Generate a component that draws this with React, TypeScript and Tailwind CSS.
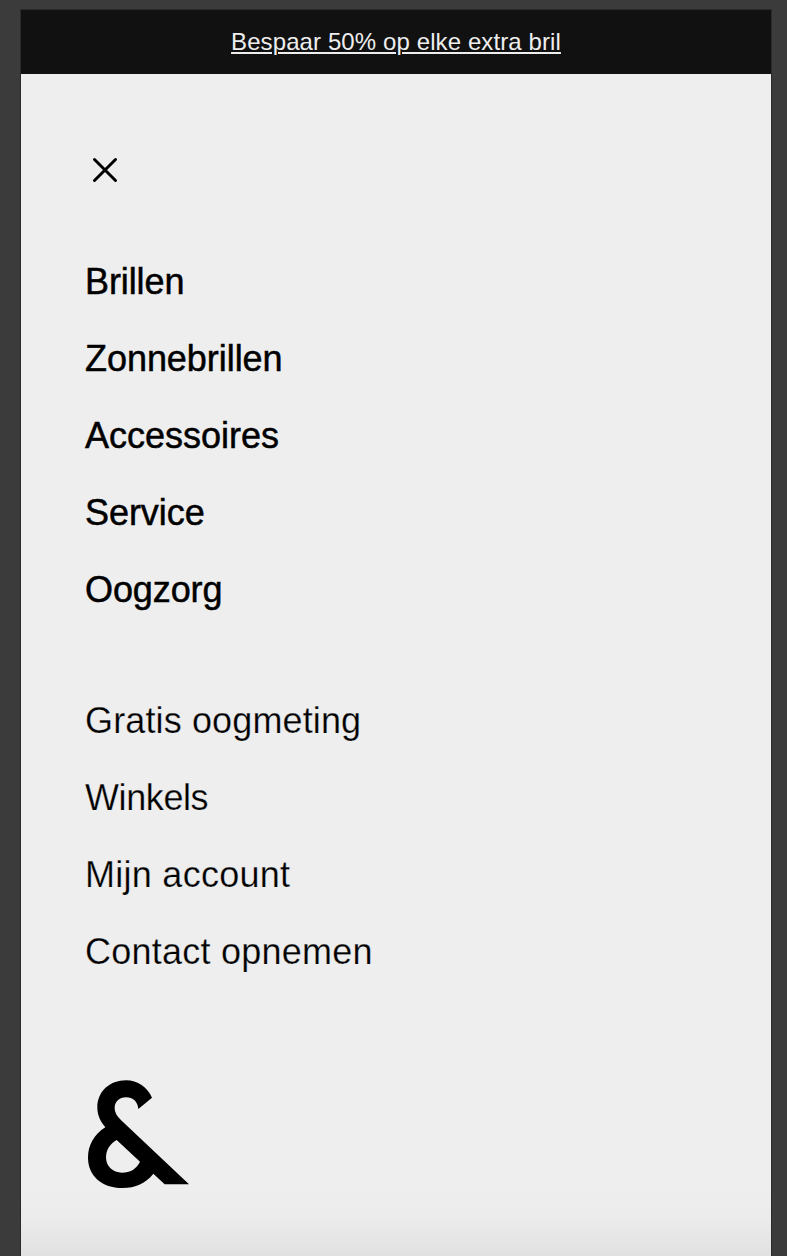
const primary = [
  { label: 'Brillen', tracking: 'tracking-[-0.1px]' },
  { label: 'Zonnebrillen', tracking: 'tracking-[-0.05px]' },
  { label: 'Accessoires', tracking: 'tracking-[0px]' },
  { label: 'Service', tracking: 'tracking-[-0.05px]' },
  { label: 'Oogzorg', tracking: 'tracking-[-0.1px]' },
];

const secondary = [
  { label: 'Gratis oogmeting', tracking: 'tracking-[0.13px]' },
  { label: 'Winkels', tracking: 'tracking-[-0.4px]' },
  { label: 'Mijn account', tracking: 'tracking-[0.27px]' },
  { label: 'Contact opnemen', tracking: 'tracking-[0.23px]' },
];

function CloseIcon() {
  return (
    <svg className="block h-7 w-7" viewBox="0 0 28 28" fill="none" stroke="#000" strokeWidth="3" strokeLinecap="round" aria-hidden="true">
      <path d="M3.5 3.5 24.5 24.5M24.5 3.5 3.5 24.5" />
    </svg>
  );
}

function Ampersand() {
  return (
    <svg className="block h-[135px] w-[130px]" viewBox="0 0 390 405" aria-hidden="true">
      <path
        fillRule="evenodd"
        d="M231 98C217 67 188 46 153 46C104 46 67 80 67 127C67 151 76 170 91 187C57 208 39 241 39 278C39 332 80 369 143 369C181 369 212 355 235 326L269 358H342L140 167C126 153 119 143 119 128C119 110 133 97 153 97C174 97 188 110 190 132ZM125 225L195 290C183 313 165 323 141 323C113 323 93 304 93 277C93 255 105 236 125 225Z"
      />
    </svg>
  );
}

export default function App() {
  return (
    <div className="h-[1256px] overflow-hidden bg-[#3b3b3b] px-5 pt-[9px] font-['Liberation_Sans',Arial,sans-serif]">
      <div className="flex h-[1247px] w-[752px] flex-col border-x border-t border-[#2a2a2a] bg-[#eeeeee] bg-[linear-gradient(to_bottom,#eeeeee_0,#eeeeee_1180px,#ebebeb_1210px,#e1e1e1_100%)]">
        <header className="flex h-16 shrink-0 items-center justify-center bg-[#111111]">
          <a className="text-2xl leading-none tracking-[0.1px] whitespace-nowrap text-[#eeeeee] underline decoration-2 underline-offset-[2px]">
            Bespaar 50% op elke extra bril
          </a>
        </header>
        <nav className="flex flex-col items-start pt-[82px] pl-16">
          <button className="ml-[6px]" aria-label="Sluiten">
            <CloseIcon />
          </button>
          <ul className="mt-[59px]">
            {primary.map((item) => (
              <li key={item.label} className="flex h-[77px] items-center">
                <a className={`${item.tracking} text-4xl leading-none whitespace-nowrap text-black [-webkit-text-stroke:0.5px_#000]`}>{item.label}</a>
              </li>
            ))}
          </ul>
          <ul className="mt-[54px]">
            {secondary.map((item) => (
              <li key={item.label} className="flex h-[77px] items-center">
                <a className={`${item.tracking} text-4xl leading-none whitespace-nowrap text-black [-webkit-text-stroke:0.25px_#eeeeee]`}>{item.label}</a>
              </li>
            ))}
          </ul>
          <div className="-ml-[10px] mt-[75px]">
            <Ampersand />
          </div>
        </nav>
      </div>
    </div>
  );
}
